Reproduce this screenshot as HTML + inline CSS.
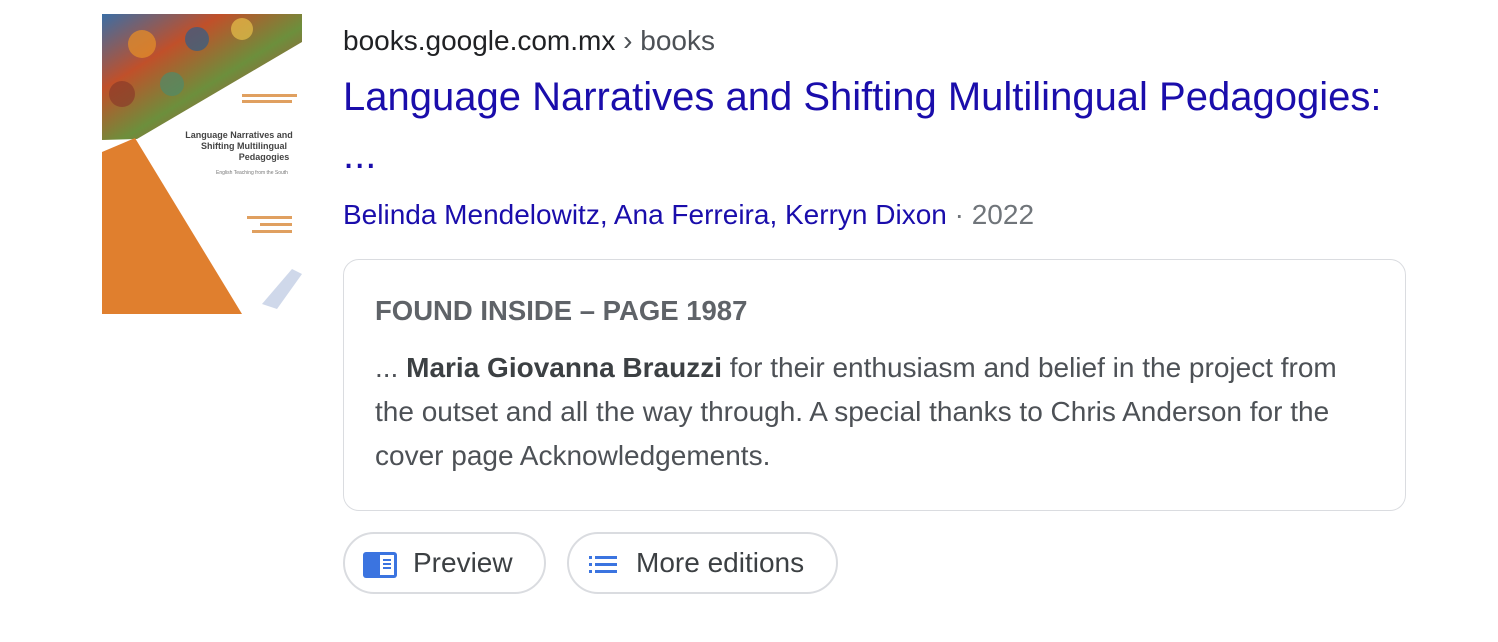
<!DOCTYPE html>
<html><head><meta charset="utf-8"><style>
body{margin:0;width:1498px;height:642px;background:#fff;font-family:"Liberation Sans",Arial,sans-serif;position:relative;overflow:hidden}
.a{position:absolute;white-space:nowrap}
.url{left:343px;top:25px;font-size:28px;line-height:32px;color:#202124}
.url span{color:#4d5156}
.t{left:343px;top:68px;font-size:40px;color:#1a0dab;line-height:58px}
.au{left:343px;top:199px;font-size:28px;line-height:32px;color:#1a0dab}
.au span{color:#70757a}
.box{position:absolute;left:343px;top:259px;width:1063px;height:252px;border:1px solid #dadce0;border-radius:16px;box-sizing:border-box}
.fi{left:375px;top:295px;font-size:27.5px;line-height:32px;font-weight:bold;color:#5f6368}
.bd{left:375px;top:346px;font-size:28px;line-height:44px;color:#4d5156}
.bd b{color:#3c4043}
.btn{position:absolute;top:532px;height:62px;border:2px solid #dadce0;border-radius:31px;box-sizing:border-box;font-size:28px;color:#3c4043}
.btn span{position:absolute;top:14px;line-height:30px}
</style></head><body>
<svg class="a" style="left:102px;top:14px" width="200" height="300" viewBox="0 0 200 300">
<rect width="200" height="300" fill="#fff"/>
<defs><linearGradient id="g" x1="0" y1="0" x2="1" y2="1">
<stop offset="0" stop-color="#3b6ea5"/><stop offset=".3" stop-color="#c0502a"/><stop offset=".55" stop-color="#6c8f3c"/><stop offset=".8" stop-color="#b44a3a"/><stop offset="1" stop-color="#d9a437"/></linearGradient></defs>
<polygon points="0,0 200,0 200,28 35,125 0,126" fill="url(#g)"/>
<circle cx="40" cy="30" r="14" fill="#e08a2a" opacity=".8"/><circle cx="95" cy="25" r="12" fill="#2f5d8a" opacity=".7"/><circle cx="140" cy="15" r="11" fill="#e7c04a" opacity=".7"/><circle cx="20" cy="80" r="13" fill="#8a3a2a" opacity=".7"/><circle cx="70" cy="70" r="12" fill="#4e8a6a" opacity=".7"/>
<polygon points="0,138 33,124 140,300 0,300" fill="#e07f2e"/>
<text x="137" y="124" font-size="9" font-weight="bold" fill="#444" text-anchor="middle" font-family="Liberation Sans">Language Narratives and</text>
<text x="142" y="135" font-size="9" font-weight="bold" fill="#444" text-anchor="middle" font-family="Liberation Sans">Shifting Multilingual</text>
<text x="162" y="146" font-size="9" font-weight="bold" fill="#444" text-anchor="middle" font-family="Liberation Sans">Pedagogies</text>
<text x="150" y="160" font-size="5" fill="#777" text-anchor="middle">English Teaching from the South</text>
<rect x="140" y="80" width="55" height="3" fill="#e0a060"/><rect x="140" y="86" width="50" height="3" fill="#e0a060"/>
<rect x="145" y="202" width="45" height="3" fill="#e0a060"/><rect x="158" y="209" width="32" height="3" fill="#e0a060"/><rect x="150" y="216" width="40" height="3" fill="#e0a060"/>
<polygon points="160,290 190,255 200,260 175,295" fill="#cfd8ea"/>
</svg>
<div class="a url">books.google.com.mx <span>› books</span></div>
<div class="a t">Language Narratives and Shifting Multilingual Pedagogies:<br>...</div>
<div class="a au">Belinda Mendelowitz, Ana Ferreira, Kerryn Dixon <span>· 2022</span></div>
<div class="box"></div>
<div class="a fi">FOUND INSIDE – PAGE 1987</div>
<div class="a bd">... <b>Maria Giovanna Brauzzi</b> for their enthusiasm and belief in the project from<br>the outset and all the way through. A special thanks to Chris Anderson for the<br>cover page Acknowledgements.</div>
<div class="btn" style="left:343px;width:203px">
<svg style="position:absolute;left:18px;top:18px" width="34" height="26" viewBox="0 0 34 26"><rect width="34" height="26" rx="3" fill="#3b74e0"/><rect x="17" y="3" width="14" height="20" fill="#fff"/><rect x="20" y="7" width="8" height="2" fill="#3b74e0"/><rect x="20" y="11" width="8" height="2" fill="#3b74e0"/><rect x="20" y="15" width="8" height="2" fill="#3b74e0"/></svg>
<span style="left:68px">Preview</span></div>
<div class="btn" style="left:567px;width:271px">
<svg style="position:absolute;left:20px;top:21px" width="30" height="18" viewBox="0 0 30 18"><g fill="#3b74e0"><rect x="0" y="1" width="3" height="3"/><rect x="0" y="8" width="3" height="3"/><rect x="0" y="15" width="3" height="3"/><rect x="6" y="1" width="22" height="3"/><rect x="6" y="8" width="22" height="3"/><rect x="6" y="15" width="22" height="3"/></g></svg>
<span style="left:67px">More editions</span></div>
</body></html>
